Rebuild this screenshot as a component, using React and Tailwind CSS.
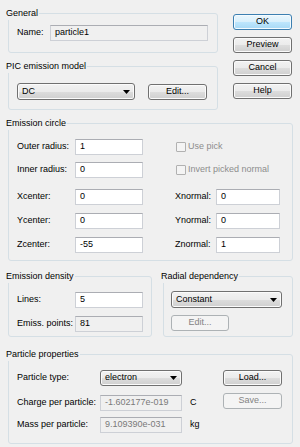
import React from 'react'

function Group({ title, className = '', children }) {
  return (
    <fieldset className={`border border-[#d5dfe5] rounded-[3px] ${className}`}>
      <legend className="-ml-[4px] px-[1px] leading-[13px]">{title}</legend>
      {children}
    </fieldset>
  )
}

function Field({ children, className = '', ro, dim }) {
  return (
    <div
      className={`h-[16px] flex items-center pl-[4px] border border-[#cdd0d6] border-t-[#abadb3]
        ${ro ? 'bg-[#f0f0f0]' : 'bg-white'} ${dim ? 'text-[#7a7a7a]' : ''} ${className}`}
    >
      {children}
    </div>
  )
}

function Btn({ children, className = '', primary, disabled }) {
  let look = 'border-[#707070] bg-[linear-gradient(#f2f2f2_0%,#ebebeb_50%,#dddddd_51%,#cfcfcf_100%)] shadow-[inset_0_0_0_1px_#fbfbfb]'
  if (primary) look = 'border-[#3c7fb1] bg-[linear-gradient(#eaf6fd_0%,#d9f0fc_50%,#bee6fd_51%,#a7d9f5_100%)] shadow-[inset_0_0_0_1px_#f4fbff]'
  if (disabled) look = 'border-[#adb2b5] bg-[#f4f4f4] text-[#838383]'
  return (
    <div className={`h-[16px] flex items-center justify-center border rounded-[3px] ${look} ${className}`}>
      {children}
    </div>
  )
}

function Combo({ children, className = '' }) {
  return (
    <div
      className={`flex items-center justify-between pl-[4px] pr-[4px] border border-[#707070] rounded-[3px]
        bg-[linear-gradient(#f2f2f2_0%,#ebebeb_50%,#dddddd_51%,#cfcfcf_100%)] shadow-[inset_0_0_0_1px_#fbfbfb] ${className}`}
    >
      <span>{children}</span>
      <svg width="7" height="4" viewBox="0 0 7 4" aria-hidden="true">
        <path d="M0 0h7L3.5 4z" fill="#000" />
      </svg>
    </div>
  )
}

function Check({ label }) {
  return (
    <div className="flex items-center ml-[1px] text-[#8d8d8d]">
      <span className="w-[10px] h-[10px] border border-[#b1b1b1] bg-[#f4f4f4] rounded-[1px]" />
      <span className="ml-[2px]">{label}</span>
    </div>
  )
}

function Normal({ label, value }) {
  return (
    <div className="flex items-center">
      <span className="w-[41px]">{label}</span>
      <Field className="w-[64px]">{value}</Field>
    </div>
  )
}

function CircleRow({ label, value, right, className = '' }) {
  return (
    <div className={`flex items-center h-[16px] ${className}`}>
      <span className="w-[58px]">{label}</span>
      <Field className="w-[68px]">{value}</Field>
      <div className="ml-[32px]">{right}</div>
    </div>
  )
}

export default function App() {
  return (
    <div className="w-[300px] h-[447px] overflow-hidden bg-[#f0f0f0] pl-[8px] pt-[7px] text-[9px] text-black font-['Liberation_Sans',Arial,sans-serif]">
      <div className="flex">
        <div className="w-[210px]">
          <Group title="General">
            <div className="pt-[5px] pb-[11px] pl-[8px] flex items-center">
              <span className="w-[33px]">Name:</span>
              <Field ro className="w-[158px]">particle1</Field>
            </div>
          </Group>

          <Group title="PIC emission model" className="mt-[7px]">
            <div className="pt-[10px] pb-[9px] pl-[8px] flex items-center">
              <Combo className="w-[118px] h-[17px]">DC</Combo>
              <Btn className="ml-[13px] w-[59px]">Edit...</Btn>
            </div>
          </Group>
        </div>

        <div className="ml-[15px] pt-[7px] w-[59px] flex flex-col gap-[7px]">
          <Btn primary>OK</Btn>
          <Btn>Preview</Btn>
          <Btn>Cancel</Btn>
          <Btn>Help</Btn>
        </div>
      </div>

      <Group title="Emission circle" className="mt-[7px] w-[285px]">
        <div className="pt-[9px] pb-[7px] pl-[8px]">
          <CircleRow label="Outer radius:" value="1" right={<Check label="Use pick" />} />
          <CircleRow className="mt-[7px]" label="Inner radius:" value="0" right={<Check label="Invert picked normal" />} />
          <CircleRow className="mt-[11px]" label="Xcenter:" value="0" right={<Normal label="Xnormal:" value="0" />} />
          <CircleRow className="mt-[8px]" label="Ycenter:" value="0" right={<Normal label="Ynormal:" value="0" />} />
          <CircleRow className="mt-[8px]" label="Zcenter:" value="-55" right={<Normal label="Znormal:" value="1" />} />
        </div>
      </Group>

      <div className="flex mt-[9px]">
        <Group title="Emission density" className="w-[144px]">
          <div className="pt-[9px] pb-[4px] pl-[8px]">
            <div className="flex items-center">
              <span className="w-[58px]">Lines:</span>
              <Field className="w-[68px]">5</Field>
            </div>
            <div className="flex items-center mt-[8px]">
              <span className="w-[58px]">Emiss. points:</span>
              <Field ro className="w-[68px]">81</Field>
            </div>
          </div>
        </Group>

        <Group title="Radial dependency" className="ml-[11px] w-[130px]">
          <div className="pt-[8px] pl-[7px]">
            <Combo className="w-[111px] h-[17px]">Constant</Combo>
            <Btn disabled className="mt-[7px] w-[58px]">Edit...</Btn>
          </div>
        </Group>
      </div>

      <Group title="Particle properties" className="mt-[11px] w-[285px]">
        <div className="pt-[9px] pb-[10px] pl-[8px]">
          <div className="flex items-center">
            <span className="w-[83px]">Particle type:</span>
            <Combo className="w-[82px] h-[16px]">electron</Combo>
            <Btn className="ml-[41px] w-[59px]">Load...</Btn>
          </div>

          <div className="flex items-start mt-[7px]">
            <div className="flex items-center mt-[2px]">
              <span className="w-[83px]">Charge per particle:</span>
              <Field ro dim className="w-[82px] h-[15px]">-1.602177e-019</Field>
              <span className="w-[41px] pl-[8px]">C</span>
            </div>
            <Btn disabled className="w-[59px]">Save...</Btn>
          </div>

          <div className="flex items-center mt-[6px]">
            <span className="w-[83px]">Mass per particle:</span>
            <Field ro dim className="w-[82px] h-[15px]">9.109390e-031</Field>
            <span className="pl-[8px]">kg</span>
          </div>
        </div>
      </Group>
    </div>
  )
}
